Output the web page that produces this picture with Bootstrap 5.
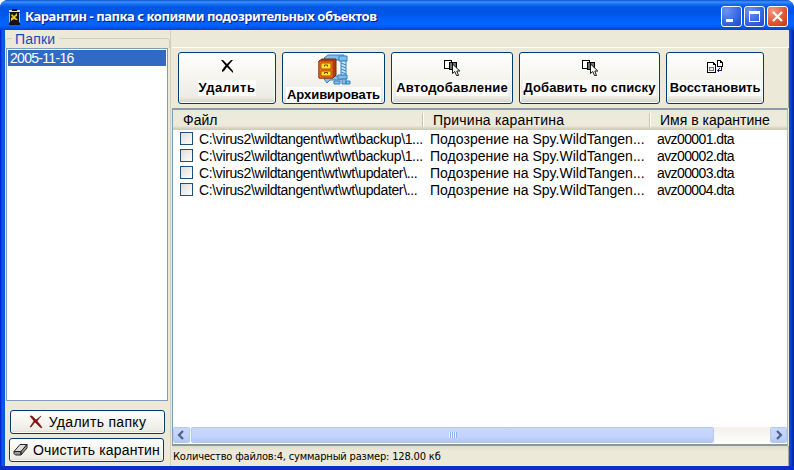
<!DOCTYPE html>
<html lang="ru">
<head>
<meta charset="utf-8">
<title>Карантин - папка с копиями подозрительных объектов</title>
<link href="https://cdn.jsdelivr.net/npm/bootstrap@5.3.0/dist/css/bootstrap.min.css" rel="stylesheet">
<style>
body{width:794px;height:470px;overflow:hidden;background:#fff;font-family:"Liberation Sans",sans-serif;color:#000;font-size:14px;line-height:17px}
svg{display:block;flex:none}
.win{width:794px;height:470px;background:linear-gradient(90deg,#0019cf 0,#0855e8 2px,#0f5ceb 3px,#0855dd 4px,#0855dd 790px,#0040d8 791px,#001ea0 794px);border-radius:8px 8px 0 0;overflow:hidden;padding:0 5px 4px 5px;box-shadow:inset 0 -4px 0 #0a2fc8}
.titlebar{height:30px;margin:0 -5px;padding:3px 6px 0 8px;background:linear-gradient(#0a50d0 0,#3a93ff 2px,#1a6ef5 4px,#0058e6 7px,#0054e3 12px,#0061fb 20px,#0066ff 25px,#0058ee 27px,#0044cf 30px)}
.cap{color:#fff;font:bold 13px/20px "Noto Sans",sans-serif;letter-spacing:-.43px;text-shadow:1px 1px 1px #0a1883;white-space:nowrap;padding-bottom:1px}
.cbtn{width:21px;height:21px;border:1px solid #fff;border-radius:3px;background:radial-gradient(circle at 25% 20%,#6b93f2,#3465e2 60%,#1d48c8)}
.cbtn.x{background:radial-gradient(circle at 25% 20%,#f09a80,#e0532f 60%,#c23a14)}
.client{height:436px;background:#ece9d8}
.side{width:165px;padding:0 3px 0 1px}
.legend{height:18px;position:relative;color:#1a46c0;padding-left:12px;line-height:18px}
.frame{position:absolute;left:-1px;right:-3px;top:8px;height:10px;border:1px solid #d0d0bf;border-bottom:0;border-radius:4px 4px 0 0}
.legend b{position:relative;background:#ece9d8;padding:0 4px 0 3px;font-weight:400;margin-left:-6px;letter-spacing:.2px}
.lbox{width:162px;height:353px;background:#fff;border:1px solid #7f9db9;padding:1px}
.sel{background:#316ac5;color:#fff;height:16px;line-height:17px;padding-left:2px;letter-spacing:-.7px}
.xbtn{border:1px solid #003c74;border-radius:3px;background:linear-gradient(#fff,#f5f4ee 50%,#ecebe5 88%,#d6d0c5);box-shadow:inset 0 0 0 1px #fbfbf8;white-space:nowrap;flex:none}
.sbtn{height:24px;width:155px;color:#000}
.main{width:619px;border-left:1px solid #d0d0bf;padding-left:1px}
.strip{height:18px;border-bottom:1px solid #fff}
.tools{height:60px;padding:4px 0 0 6px;gap:6px;border-right:1px solid #aca899}
.tbtn{height:52px}
.tbtn em{font:bold 13px/16px "Liberation Sans",sans-serif;background:#fff;display:block;text-align:center;height:16px;position:static}
.list{width:616px;height:338px;background:#fff;border:2px solid #7f9db9;border-top-color:#8c9ba3;border-left:1px solid #7f9db9;border-right:1px solid #aebdc4;border-bottom:2px solid #8a9a9c}
.hd{height:20px;background:linear-gradient(#ebeadb 0,#ebeadb 16px,#e0dccb 17px,#cbc7b8 20px);line-height:20px}
.hd div,.rw div{flex:none;white-space:nowrap}
.hd div{position:relative;height:20px}
.hd div+div::before{content:"";position:absolute;left:-1px;top:3px;height:14px;width:2px;border-left:1px solid #c7c5b2;background:#fff}
.rw{height:17px;line-height:19px}
.pth{letter-spacing:-.37px}
.rsn{letter-spacing:.03px}
.nam{letter-spacing:-.6px}
.chk{width:13px;height:13px;border:1px solid #1c5180;background:linear-gradient(135deg,#dcdcd7,#fff);margin:2px 6px 0 7px}
.sb{height:17px;background:linear-gradient(#f3f1ec,#fefefb)}
.thumb{border:1px solid #fff;outline:1px solid #b5c8f0;outline-offset:-1px;border-radius:2px;background:linear-gradient(#c9d7fc,#c3d3fd 60%,#b3c5f6);height:16px}
.grip{width:8px;height:6px;background:repeating-linear-gradient(90deg,#eef4fe 0 1px,#8cb0f8 1px 2px)}
.status{height:20px;font:11px/21px "DejaVu Sans Condensed","DejaVu Sans",sans-serif;letter-spacing:-.16px;padding-left:1px;border-right:1px solid #aca899;white-space:nowrap;background:linear-gradient(#dfdccb,#ece9d8 5px)}
</style>
<script src="https://cdn.jsdelivr.net/npm/bootstrap@5.3.0/dist/js/bootstrap.bundle.min.js"></script>
</head>
<body>
<svg width="0" height="0" class="position-absolute"><defs>
<g id="stack" shape-rendering="crispEdges"><path d="M.5.5h7v8h-7z" fill="#fff" stroke="#000"/><path d="M5.500 2.500h3v7h-3zM8.500 2.500h4v7h-4z" fill="#667766" stroke="#000"/><path d="M8.500 4v9.500l2.300-2 1.700 4h2l-1.700-4.500h3z" fill="#fff" stroke="#000" stroke-width=".9" shape-rendering="auto"/></g>
</defs></svg>
<div class="win">
 <div class="titlebar d-flex align-items-center">
  <svg width="13" height="16" viewBox="0 0 13 16"><path d="M1 1h11v2H1z" fill="#ddd"/><path d="M2 3h9v12H2z" fill="#15150a"/><path d="M4 0h5v2H4zM1 14h11v2H1z" fill="#111"/><path d="M4 5l2 2 3-3v3l-2 1 3 3H8L6 10l-3 2V9l2-1-2-1z" fill="#e6c83c"/><path d="M1 4h1v9H1zM11 4h1v9h-1z" fill="#bbb"/></svg>
  <div class="cap flex-grow-1 ps-1">Карантин - папка с копиями подозрительных объектов</div>
  <div class="d-flex" style="gap:2px">
   <div class="cbtn"><svg width="19" height="19"><path d="M4 12h7v3H4z" fill="#fff"/></svg></div>
   <div class="cbtn"><svg width="19" height="19"><path d="M4 4h11v11H4zM5 7v7h9V7z" fill="#fff" fill-rule="evenodd"/></svg></div>
   <div class="cbtn x"><svg width="19" height="19"><path d="M5 5l9 9M14 5l-9 9" stroke="#fff" stroke-width="2.200"/></svg></div>
  </div>
 </div>
 <div class="client d-flex">
  <div class="side d-flex flex-column">
   <div class="legend"><div class="frame"></div><b>Папки</b></div>
   <div class="lbox"><div class="sel">2005-11-16</div></div>
   <div class="xbtn sbtn d-flex align-items-center justify-content-center ms-1" style="margin-top:9px;gap:6px">
    <svg width="14" height="14" viewBox="0 0 14 14"><path d="M1 1h2l4 4 5-4-4 5 4 5 1 2-2-1-5-5-4 5H1l4-6z" fill="#8b0c0c" stroke="#7c0808" stroke-width=".6"/></svg>
    <span style="letter-spacing:.3px">Удалить папку</span></div>
   <div class="xbtn sbtn d-flex align-items-center justify-content-center" style="margin:4px 0 0 3px;gap:5px">
    <svg width="15" height="12" viewBox="0 0 15 12"><path d="M1 7.500L7 .5h7L8 7.500z" fill="#ddd" stroke="#222"/><path d="M1 7.500h7v3.500H2.500L1 9.500zM8 7.500l6-7v3.500L8 11z" fill="#999" stroke="#222"/></svg>
    <span style="letter-spacing:.15px">Очистить карантин</span></div>
  </div>
  <div class="main">
   <div class="strip"></div>
   <div class="tools d-flex">
    <div class="xbtn tbtn" style="width:98px;padding:6px 19px 0"><svg class="mx-auto" width="14" height="14" viewBox="0 0 14 14"><path d="M1 1h2l4 4 4-4h2L8.300 6.500 13 12v2l-2-2-4-4-3 4-2 1v-2l3.500-4.500z" fill="#000"/></svg><em style="margin-top:7px;letter-spacing:.5px">Удалить</em></div>
    <div class="xbtn tbtn" style="width:103px;padding:1px 3px 0"><svg class="mx-auto" width="34" height="32" viewBox="0 0 34 32">
      <g stroke="#3b7fbd" fill="#7cc0f0"><path d="M7 4l4-3h16v5H15l-3 2zM7 25l5-3h12v4H13l-3 3z"/><path d="M22 2h8v5h-8zM21 21h9v4h-9z"/><path d="M24 7h5v14h-5z" fill="#c8e9ff"/><path d="M25 25h4v5h-4zM17 27h6v3h-6zM29 27h4v3h-4z"/></g><path d="M24 9l5 2M24 12l5 2M24 15l5 2M24 18l5 2" stroke="#3a8ccc" stroke-width="1.200"/>
      <path d="M2 7l3-2h14v16l-3 3H2z" fill="#b83c0c" stroke="#7a2708"/><path d="M2 7h14v17H2z" fill="#f17b1b" stroke="#a8370a"/><path d="M4 9h10v6H4zM4 17h10v5H4z" fill="#ffe632" stroke="#b34c00"/><path d="M7.500 12.500v-1.500h3v1.500M7.500 20v-1.500h3V20" fill="none" stroke="#8b3000"/></svg><em style="margin-top:1px;letter-spacing:-.05px">Архивировать</em></div>
    <div class="xbtn tbtn" style="width:122px;padding:7px 4px 0"><svg class="mx-auto" width="16" height="17"><use href="#stack"/></svg><em style="margin-top:3px;letter-spacing:.2px">Автодобавление</em></div>
    <div class="xbtn tbtn" style="width:141px;padding:7px 3px 0"><svg class="mx-auto" width="16" height="17"><use href="#stack"/></svg><em style="margin-top:3px;letter-spacing:.12px">Добавить по списку</em></div>
    <div class="xbtn tbtn" style="width:98px;padding:7px 2px 0"><svg class="mx-auto" width="17" height="15" viewBox="0 0 17 15" shape-rendering="crispEdges"><path d="M.5 2.500h6l2 2v8h-8z" fill="#fff" stroke="#000"/><path d="M6.500 2.500v2h2" fill="none" stroke="#000"/><path d="M2.500 7.500h4v3h-4z" fill="#eee" stroke="#777"/><path d="M10.500.5h3l2 2v4h-5z" fill="#fff" stroke="#000"/><path d="M13.500.5v2h2" fill="none" stroke="#000"/><path d="M14.500 7v3.500h-4M12.500 8.500l-2 2 2 2" fill="none" stroke="#24109a"/></svg><em style="margin-top:5px;letter-spacing:-.05px">Восстановить</em></div>
   </div>
   <div class="list d-flex flex-column">
    <div class="hd d-flex"><div style="width:250px;padding-left:10px">Файл</div><div style="width:227px;padding-left:10px;letter-spacing:.22px">Причина карантина</div><div style="width:136px;padding-left:10px">Имя в карантине</div></div>
    <div class="rw d-flex"><div class="chk"></div><div class="pth" style="width:231px">C:\virus2\wildtangent\wt\wt\backup\1...</div><div class="rsn" style="width:227px">Подозрение на Spy.WildTangen...</div><div class="nam">avz00001.dta</div></div>
    <div class="rw d-flex"><div class="chk"></div><div class="pth" style="width:231px">C:\virus2\wildtangent\wt\wt\backup\1...</div><div class="rsn" style="width:227px">Подозрение на Spy.WildTangen...</div><div class="nam">avz00002.dta</div></div>
    <div class="rw d-flex"><div class="chk"></div><div class="pth" style="width:231px">C:\virus2\wildtangent\wt\wt\updater\...</div><div class="rsn" style="width:227px">Подозрение на Spy.WildTangen...</div><div class="nam">avz00003.dta</div></div>
    <div class="rw d-flex"><div class="chk"></div><div class="pth" style="width:231px">C:\virus2\wildtangent\wt\wt\updater\...</div><div class="rsn" style="width:227px">Подозрение на Spy.WildTangen...</div><div class="nam">avz00004.dta</div></div>
    <div class="sb d-flex mt-auto"><div class="thumb" style="width:17px"><svg width="15" height="14"><path d="M9 3L5 7l4 4" fill="none" stroke="#4d6185" stroke-width="2.200"/></svg></div><div class="thumb d-flex align-items-center justify-content-center" style="width:523px;margin-left:1px"><div class="grip"></div></div><div class="thumb ms-auto" style="width:17px"><svg width="15" height="14"><path d="M6 3l4 4-4 4" fill="none" stroke="#4d6185" stroke-width="2.200"/></svg></div></div>
   </div>
   <div class="status">Количество файлов:4, суммарный размер: 128.00 кб</div>
  </div>
 </div>
</div>
</body>
</html>
